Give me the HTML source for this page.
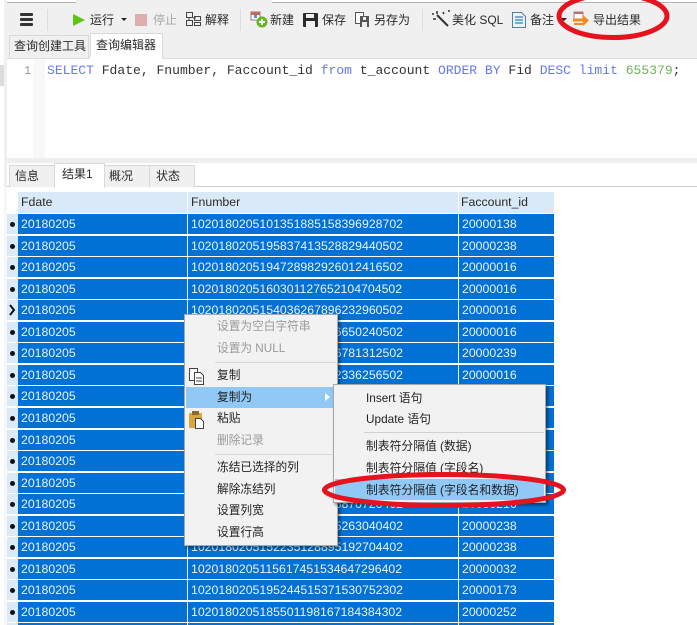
<!DOCTYPE html>
<html><head><meta charset="utf-8">
<style>
html,body{margin:0;padding:0;background:#fff}
#p{position:relative;width:697px;height:625px;overflow:hidden;background:#fff;font-family:"Liberation Sans","Noto Sans CJK SC",sans-serif;font-size:12px;color:#222}
.a{position:absolute;white-space:nowrap}
.t{position:absolute;white-space:nowrap;line-height:16px;font-size:12px;color:#2a2a2a}
.r{position:absolute;left:7px;width:547px;height:20px;background:#e8f1f9}
.r b{position:absolute;top:0;left:0;width:11px;height:20px;background:#daeaf7;font-weight:normal}
.r b:after{content:"";position:absolute;left:3px;top:8px;width:5px;height:5px;border-radius:50%;background:#111}
.r i{position:absolute;top:0;height:20px;line-height:20px;background:#0271d6;color:#e9f3fc;font-style:normal;font-size:12.3px;padding-left:3px;box-sizing:border-box}
.c1{left:11px;width:169px}
.c2{left:181px;width:270px}
.c3{left:452px;width:95px}
.m{position:absolute;font-size:11.7px;line-height:16px;color:#222;white-space:nowrap}
.s{position:absolute;font-size:11.8px;line-height:16px;color:#222;white-space:nowrap}
.d{color:#9a9a9a}
.code{position:absolute;left:47px;top:63px;font-family:"Liberation Mono",monospace;font-size:13.04px;line-height:16px;white-space:pre;color:#333}
.k{color:#6678ee}
</style></head><body><div id="p">

<!-- toolbar -->
<div class="a" style="left:0;top:0;width:697px;height:62px;background:#f0f0f0"></div>
<div class="a" style="left:7px;top:0;width:69px;height:2px;background:#fff;border-bottom:1px solid #b5b5b5"></div>
<div class="a" style="left:272px;top:0;width:425px;height:2px;background:#fff;border-bottom:1px solid #b5b5b5"></div>
<div class="a" style="left:20px;top:13px;width:13px;height:3px;background:#333;border-radius:1px"></div>
<div class="a" style="left:20px;top:18px;width:13px;height:3px;background:#333;border-radius:1px"></div>
<div class="a" style="left:20px;top:23px;width:13px;height:3px;background:#333;border-radius:1px"></div>
<div class="a" style="left:47px;top:9px;width:1px;height:22px;background:#dcdcdc"></div>
<div class="a" style="left:240px;top:9px;width:1px;height:22px;background:#dcdcdc"></div>
<div class="a" style="left:422px;top:9px;width:1px;height:22px;background:#dcdcdc"></div>

<svg class="a" style="left:0;top:0" width="697" height="40">
<polygon points="73,14 73,26 85,20" fill="#5cc412"/>
<polygon points="121,18 127,18 124,21" fill="#222"/>
<rect x="135" y="14" width="12" height="12" fill="#dcaeae"/>
<g fill="none" stroke="#444" stroke-width="1">
<rect x="186.500" y="12.500" width="6" height="5"/><rect x="186.500" y="20.500" width="6" height="5"/><rect x="194.500" y="16.500" width="6" height="4"/><rect x="194.500" y="22.500" width="6" height="3"/>
<path d="M189 18v3M193 18h3"/></g>
<rect x="251" y="12" width="9" height="8" fill="#fff" stroke="#9a7c7c"/><rect x="251" y="12" width="9" height="3" fill="#c7685e"/><rect x="254" y="15" width="3" height="3" fill="#5c8fd0"/>
<circle cx="262" cy="22" r="5.500" fill="#63b81e"/><path d="M259 22h6M262 19v6" stroke="#fff" stroke-width="2"/>
<rect x="303" y="13" width="15" height="14" rx="1" fill="#2b2b2b"/><rect x="306" y="14" width="8" height="4" fill="#f0f0f0"/><rect x="306" y="21" width="9" height="6" fill="#f0f0f0"/>
<rect x="355.500" y="12.500" width="8" height="11" fill="#fff" stroke="#555"/><rect x="360" y="16" width="9" height="11" fill="#555"/><rect x="363" y="17" width="3" height="3" fill="#f0f0f0"/><rect x="362" y="22" width="5" height="5" fill="#eee"/>
<path d="M437 15l11 11" stroke="#333" stroke-width="2"/><path d="M437 11v3M433 19h3M443 12l1 2M449 10v2M432 14h2" stroke="#333" stroke-width="1.500"/>
<path d="M512.500 12.500h9l4 4v11h-13z" fill="#eaf3fa" stroke="#5a7d98"/><path d="M515 17h8M515 20h8M515 23h8" stroke="#4d95c9" stroke-width="1.500"/>
<polygon points="561,18 567,18 564,21" fill="#222"/>
<rect x="574" y="12" width="9" height="7" fill="#fff" stroke="#8f8fa8"/><rect x="574" y="12" width="9" height="2" fill="#c7685e"/>
<path d="M573 20h13" stroke="#f58a1f" stroke-width="3"/><path d="M583 15l6 5.500-6 5.500z" fill="#f58a1f"/><path d="M574 24h9" stroke="#f58a1f" stroke-width="2"/>
</svg>

<div class="t" style="left:90px;top:12px">运行</div>
<div class="t" style="left:153px;top:12px;color:#a8a8a8">停止</div>
<div class="t" style="left:205px;top:12px">解释</div>
<div class="t" style="left:270px;top:12px">新建</div>
<div class="t" style="left:322px;top:12px">保存</div>
<div class="t" style="left:374px;top:12px">另存为</div>
<div class="t" style="left:452px;top:12px">美化 SQL</div>
<div class="t" style="left:530px;top:12px">备注</div>
<div class="t" style="left:593px;top:12px">导出结果</div>

<!-- top tabs -->
<div class="a" style="left:9px;top:35px;width:80px;height:23px;background:#f0f0f0;border:1px solid #d9d9d9;border-bottom:0;box-sizing:border-box"></div>
<div class="t" style="left:14px;top:38px">查询创建工具</div>
<div class="a" style="left:90px;top:33px;width:73px;height:26px;background:#fff;border:1px solid #d9d9d9;border-bottom:0;box-sizing:border-box"></div>
<div class="t" style="left:96px;top:37px">查询编辑器</div>

<!-- editor -->
<div class="a" style="left:7px;top:58px;width:690px;height:100px;background:#fff;border-top:1px solid #dcdcdc;box-sizing:border-box"></div>
<div class="a" style="left:90px;top:57px;width:72px;height:3px;background:#fff"></div>
<div class="a" style="left:33px;top:59px;width:12px;height:99px;background:#f8f8f8"></div>
<div class="a" style="left:0;top:0;width:4px;height:625px;background:#fff"></div>
<div class="a" style="left:0;top:65px;width:4px;height:21px;background:#dcdcdc"></div>
<div class="a" style="left:4px;top:0;width:3px;height:187px;background:#f0f0f0"></div>
<div class="a" style="left:4px;top:187px;width:3px;height:438px;background:#f6f6f6"></div>
<div class="a" style="left:24px;top:63px;font-family:'Liberation Mono',monospace;font-size:12px;line-height:16px;color:#999">1</div>
<div class="code"><span class="k">SELECT</span> Fdate, Fnumber, Faccount_id <span class="k">from</span> t_account <span class="k">ORDER BY</span> Fid <span class="k">DESC</span> <span class="k">limit</span> <span style="color:#6db35c">655379</span>;</div>

<!-- bottom tabs -->
<div class="a" style="left:7px;top:158px;width:690px;height:5px;background:#eeeeee"></div>
<div class="a" style="left:7px;top:186px;width:690px;height:1px;background:#cfcfcf"></div>
<div class="a" style="left:9px;top:165px;width:46px;height:22px;background:#f0f0f0;border:1px solid #d9d9d9;border-bottom:0;box-sizing:border-box"></div>
<div class="a" style="left:104px;top:165px;width:46px;height:22px;background:#f0f0f0;border:1px solid #d9d9d9;border-bottom:0;box-sizing:border-box"></div>
<div class="a" style="left:149px;top:165px;width:46px;height:22px;background:#f0f0f0;border:1px solid #d9d9d9;border-bottom:0;box-sizing:border-box"></div>
<div class="a" style="left:54px;top:163px;width:51px;height:25px;background:#fff;border:1px solid #d9d9d9;border-bottom:0;box-sizing:border-box"></div>
<div class="t" style="left:15px;top:168px">信息</div>
<div class="t" style="left:62px;top:166px">结果1</div>
<div class="t" style="left:109px;top:168px">概况</div>
<div class="t" style="left:156px;top:168px">状态</div>

<!-- grid header -->
<div class="a" style="left:18px;top:192px;width:169px;height:21px;background:#d9e9f7"></div>
<div class="a" style="left:188px;top:192px;width:270px;height:21px;background:#d9e9f7"></div>
<div class="a" style="left:459px;top:192px;width:95px;height:21px;background:#d9e9f7"></div>
<div class="t" style="left:21px;top:194px;font-size:12.3px">Fdate</div>
<div class="t" style="left:191px;top:194px;font-size:12.3px">Fnumber</div>
<div class="t" style="left:461px;top:194px;font-size:12.3px">Faccount_id</div>

<!-- rows -->
<div class="r" style="top:214px"><b></b><i class="c1">20180205</i><i class="c2">1020180205101351885158396928702</i><i class="c3">20000138</i></div>
<div class="r" style="top:236px"><b></b><i class="c1">20180205</i><i class="c2">1020180205195837413528829440502</i><i class="c3">20000238</i></div>
<div class="r" style="top:257px"><b></b><i class="c1">20180205</i><i class="c2">1020180205194728982926012416502</i><i class="c3">20000016</i></div>
<div class="r" style="top:279px"><b></b><i class="c1">20180205</i><i class="c2">1020180205160301127652104704502</i><i class="c3">20000016</i></div>
<div class="r" style="top:300px"><b></b><i class="c1">20180205</i><i class="c2">1020180205154036267896232960502</i><i class="c3">20000016</i></div>
<div class="r" style="top:322px"><b></b><i class="c1">20180205</i><i class="c2">1020180205154036267896650240502</i><i class="c3">20000016</i></div>
<div class="r" style="top:343px"><b></b><i class="c1">20180205</i><i class="c2">1020180205154036267896781312502</i><i class="c3">20000239</i></div>
<div class="r" style="top:365px"><b></b><i class="c1">20180205</i><i class="c2">1020180205154036267892336256502</i><i class="c3">20000016</i></div>
<div class="r" style="top:386px"><b></b><i class="c1">20180205</i><i class="c2">1020180205154036267892336256502</i><i class="c3">20000016</i></div>
<div class="r" style="top:408px"><b></b><i class="c1">20180205</i><i class="c2">1020180205154036267892336256502</i><i class="c3">20000016</i></div>
<div class="r" style="top:430px"><b></b><i class="c1">20180205</i><i class="c2">1020180205154036267892336256502</i><i class="c3">20000016</i></div>
<div class="r" style="top:451px"><b></b><i class="c1">20180205</i><i class="c2">1020180205154036267892336256502</i><i class="c3">20000016</i></div>
<div class="r" style="top:473px"><b></b><i class="c1">20180205</i><i class="c2">1020180205154036267892336256502</i><i class="c3">20000016</i></div>
<div class="r" style="top:494px"><b></b><i class="c1">20180205</i><i class="c2">1020180205154036267896870720402</i><i class="c3">20000216</i></div>
<div class="r" style="top:516px"><b></b><i class="c1">20180205</i><i class="c2">1020180205152235128895263040402</i><i class="c3">20000238</i></div>
<div class="r" style="top:537px"><b></b><i class="c1">20180205</i><i class="c2">1020180205152235128895192704402</i><i class="c3">20000238</i></div>
<div class="r" style="top:559px"><b></b><i class="c1">20180205</i><i class="c2">1020180205115617451534647296402</i><i class="c3">20000032</i></div>
<div class="r" style="top:580px"><b></b><i class="c1">20180205</i><i class="c2">1020180205195244515371530752302</i><i class="c3">20000173</i></div>
<div class="r" style="top:602px"><b></b><i class="c1">20180205</i><i class="c2">1020180205185501198167184384302</i><i class="c3">20000252</i></div>
<div class="a" style="left:18px;top:623px;width:169px;height:2px;background:#0271d6"></div>
<div class="a" style="left:188px;top:623px;width:270px;height:2px;background:#0271d6"></div>
<div class="a" style="left:459px;top:623px;width:95px;height:2px;background:#0271d6"></div>
<div class="a" style="left:7px;top:623px;width:11px;height:2px;background:#daeaf7"></div>
<!-- current-row marker -->
<div class="a" style="left:7px;top:300px;width:11px;height:20px;background:#daeaf7"></div>
<svg class="a" style="left:8px;top:304px" width="9" height="12"><path d="M2 1l4 5-4 5" fill="none" stroke="#111" stroke-width="2"/></svg>

<!-- main context menu -->
<div class="a" style="left:184px;top:314px;width:154px;height:232px;background:#f2f2f2;border:1px solid #a8a8a8;box-sizing:border-box;box-shadow:2px 2px 3px rgba(0,0,0,.45)"></div>
<div class="a" style="left:215px;top:362px;width:121px;height:1px;background:#d8d8d8"></div>
<div class="a" style="left:215px;top:454px;width:121px;height:1px;background:#d8d8d8"></div>
<div class="a" style="left:186px;top:387px;width:147px;height:21px;background:#90c8f6"></div>
<svg class="a" style="left:186px;top:366px" width="30" height="70">
<g fill="#fff" stroke="#444"><rect x="3.500" y="2.500" width="8" height="12"/><path d="M8.500 6.500h6l3 3v9h-9z"/></g>
<path d="M10 12h6M10 15h6" stroke="#444"/>
<rect x="3" y="47" width="13" height="15" rx="1" fill="#dba53f"/><rect x="6" y="45" width="7" height="4" fill="#8a6a30"/>
<path d="M9.500 52.500h5l3 3v7h-8z" fill="#fff" stroke="#444"/>
</svg>
<svg class="a" style="left:324px;top:392px" width="8" height="10"><polygon points="1,1 6,5 1,9" fill="#fff"/></svg>

<div class="m d" style="left:217px;top:319px">设置为空白字符串</div>
<div class="m d" style="left:217px;top:341px">设置为 NULL</div>
<div class="m" style="left:217px;top:368px">复制</div>
<div class="m" style="left:217px;top:390px">复制为</div>
<div class="m" style="left:217px;top:411px">粘贴</div>
<div class="m d" style="left:217px;top:433px">删除记录</div>
<div class="m" style="left:217px;top:460px">冻结已选择的列</div>
<div class="m" style="left:217px;top:482px">解除冻结列</div>
<div class="m" style="left:217px;top:503px">设置列宽</div>
<div class="m" style="left:217px;top:525px">设置行高</div>

<!-- submenu -->
<div class="a" style="left:333px;top:384px;width:213px;height:119px;background:#f2f2f2;border:1px solid #a8a8a8;box-sizing:border-box;box-shadow:2px 2px 3px rgba(0,0,0,.5)"></div>
<div class="a" style="left:364px;top:432px;width:180px;height:1px;background:#d0d0d0"></div>
<div class="a" style="left:335px;top:479px;width:209px;height:21px;background:#90c8f6"></div>
<div class="s" style="left:366px;top:390px">Insert 语句</div>
<div class="s" style="left:366px;top:411px">Update 语句</div>
<div class="s" style="left:366px;top:438px">制表符分隔值 (数据)</div>
<div class="s" style="left:366px;top:460px">制表符分隔值 (字段名)</div>
<div class="s" style="left:366px;top:482px">制表符分隔值 (字段名和数据)</div>

<!-- red annotations -->
<svg class="a" style="left:0;top:0;pointer-events:none" width="697" height="625">
<ellipse cx="613" cy="16" rx="54" ry="21.500" fill="none" stroke="#e6121e" stroke-width="5"/>
<ellipse cx="444" cy="490" rx="119.500" ry="15.500" fill="none" stroke="#e6121e" stroke-width="5"/>
</svg>
</div></body></html>
